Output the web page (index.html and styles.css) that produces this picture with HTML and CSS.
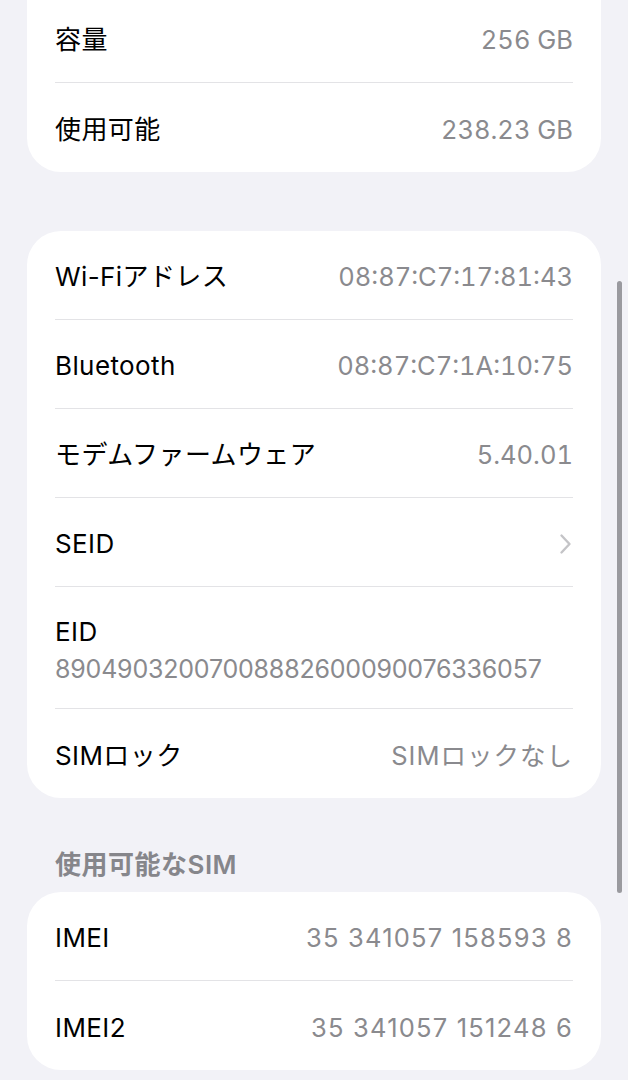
FILE: index.html
```html
<!DOCTYPE html>
<html lang="ja">
<head>
<meta charset="utf-8">
<title>情報</title>
<link rel="stylesheet" href="styles.css">
</head>
<body>
<div class="screen">
  <div class="card card-first">
    <div class="row"><span class="label">容量</span><span class="value">256 GB</span></div>
    <div class="row"><span class="label">使用可能</span><span class="value">238.23 GB</span></div>
  </div>

  <div class="card card-gap">
    <div class="row"><span class="label">Wi-Fiアドレス</span><span class="value">08:87:C7:17:81:43</span></div>
    <div class="row"><span class="label">Bluetooth</span><span class="value">08:87:C7:1A:10:75</span></div>
    <div class="row"><span class="label">モデムファームウェア</span><span class="value">5.40.01</span></div>
    <div class="row"><span class="label">SEID</span>
      <svg class="chevron" width="13" height="22" viewBox="0 0 13 22"><path d="M2.5 2.5 L10.5 11 L2.5 19.5" fill="none" stroke="#c4c4c7" stroke-width="2.4" stroke-linecap="round" stroke-linejoin="round"/></svg>
    </div>
    <div class="row row-stack"><span class="label">EID</span><span class="value value-eid">89049032007008882600090076336057</span></div>
    <div class="row"><span class="label">SIMロック</span><span class="value value-jp">SIMロックなし</span></div>
  </div>

  <div class="section-header">使用可能なSIM</div>
  <div class="card">
    <div class="row"><span class="label">IMEI</span><span class="value value-prop">35 341057 158593 8</span></div>
    <div class="row"><span class="label">IMEI2</span><span class="value value-prop">35 341057 151248 6</span></div>
  </div>
</div>
<div class="scrollbar"></div>
</body>
</html>
```

FILE: styles.css
```css
html, body {
  margin: 0;
  padding: 0;
}
body {
  width: 628px;
  height: 1080px;
  overflow: hidden;
  background: #f2f2f7;
  font-family: "Inter", "Noto Sans CJK JP", sans-serif;
  font-size: 26px;
  line-height: 30px;
  color: #000;
  position: relative;
  -webkit-font-smoothing: antialiased;
}
.screen {
  padding: 0 27px;
}
.card {
  background: #fff;
  border-radius: 34px;
  padding: 0 28px;
}
.card-first {
  margin-top: -6px;
  border-radius: 0 0 34px 34px;
}
.card-gap {
  margin-top: 59px;
}
.row {
  box-sizing: border-box;
  height: 89px;
  padding-top: 4px;
  display: flex;
  align-items: center;
  justify-content: space-between;
  border-bottom: 1px solid #e3e3e6;
}
.row:last-child {
  border-bottom: none;
}
.label {
  color: #000;
  white-space: nowrap;
  font-size: 26px;
  letter-spacing: 0.4px;
}
.value {
  color: #8a8a8e;
  white-space: nowrap;
  font-size: 25.5px;
  font-variant-numeric: tabular-nums;
}
.value-prop {
  font-variant-numeric: normal;
  letter-spacing: 1.2px;
}
.value-jp {
  letter-spacing: 1px;
}
.value-eid {
  font-size: 25px;
  font-variant-numeric: normal;
  letter-spacing: -0.2px;
}
.row-stack {
  height: 122px;
  flex-direction: column;
  align-items: flex-start;
  justify-content: flex-start;
  padding-top: 30px;
  gap: 7px;
}
.chevron {
  display: block;
  margin-right: 1px;
}
.section-header {
  padding: 52px 28px 12px;
  color: #86868b;
  font-weight: 600;
  font-size: 26px;
  line-height: 30px;
  letter-spacing: 0.5px;
}
.scrollbar {
  position: absolute;
  left: 617px;
  top: 281px;
  width: 5px;
  height: 612px;
  border-radius: 3px;
  background: #9a9a9f;
}
```
